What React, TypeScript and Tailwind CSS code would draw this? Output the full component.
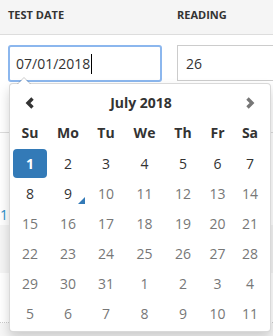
const cols = "grid grid-cols-[34px_42px_34px_43px_34px_35px_30px]";

const dow = ["Su", "Mo", "Tu", "We", "Th", "Fr", "Sa"];

// day, kind: sel | active | today | off
const weeks: [number, string][][] = [
  [[1, "sel"], [2, "active"], [3, "active"], [4, "active"], [5, "active"], [6, "active"], [7, "active"]],
  [[8, "active"], [9, "today"], [10, "off"], [11, "off"], [12, "off"], [13, "off"], [14, "off"]],
  [[15, "off"], [16, "off"], [17, "off"], [18, "off"], [19, "off"], [20, "off"], [21, "off"]],
  [[22, "off"], [23, "off"], [24, "off"], [25, "off"], [26, "off"], [27, "off"], [28, "off"]],
  [[29, "off"], [30, "off"], [31, "off"], [1, "off"], [2, "off"], [3, "off"], [4, "off"]],
  [[5, "off"], [6, "off"], [7, "off"], [8, "off"], [9, "off"], [10, "off"], [11, "off"]],
];

function Chevron({ dir }: { dir: "left" | "right" }) {
  return (
    <svg width="10" height="12" viewBox="0 0 10 12">
      <polyline
        points={dir === "left" ? "7.5,1.5 3,6 7.5,10.5" : "2.5,1.5 7,6 2.5,10.5"}
        fill="none"
        stroke="currentColor"
        strokeWidth="3.4"
        strokeLinejoin="miter"
      />
    </svg>
  );
}

function DayCell({ day, kind }: { day: number; kind: string }) {
  if (kind === "sel") {
    return (
      <div className="flex h-[30px] items-center justify-center">
        <span className="flex h-[29px] w-[34px] items-center justify-center rounded-[4px] bg-[#337ab7] font-bold text-white">
          {day}
        </span>
      </div>
    );
  }
  return (
    <div
      className={
        kind === "off"
          ? "relative flex h-[30px] items-center justify-center text-[#777]"
          : "relative flex h-[30px] items-center justify-center text-[#333]"
      }
    >
      {day}
      {kind === "today" && (
        <span className="absolute bottom-[4px] right-[4px] h-0 w-0 border-l-[7px] border-b-[7px] border-l-transparent border-b-[#337ab7]" />
      )}
    </div>
  );
}

export default function App() {
  return (
    <div className="relative h-[336px] w-[273px] overflow-hidden bg-white font-['Open_Sans',sans-serif] text-[#333]">
      {/* table behind the picker */}
      <div className="flex h-[35px] items-center border-b border-[#ddd] bg-[#f5f5f5] pb-[3px] text-[11px] font-bold uppercase">
        <div className="w-[177px] pl-[8px]">Test Date</div>
        <div>Reading</div>
      </div>
      <div className="flex h-[98px] gap-[15px] border-b border-[#ddd] px-[8px] pt-[10px]">
        <div className="flex h-[37px] w-[154px] shrink-0 items-center rounded-[3px] border-2 border-[#8cb7ee] pl-[6px] text-[14px]">
          07/01/2018
          <span className="ml-[1px] h-[20px] w-px bg-black" />
        </div>
        <div className="flex h-[36px] w-[120px] shrink-0 items-center border border-[#ccc] pl-[8px] text-[14px]">
          26
        </div>
      </div>
      <div className="flex h-[92px] items-end text-[14px] text-[#2a8fc9]">
        <span>11</span>
      </div>
      <div className="h-[48px] bg-[#f5f5f5]" />
      <div className="h-[50px] border-b border-dotted border-[#ccc]" />
      <div className="h-[20px] bg-[#f7f7f7]" />

      {/* date picker popup */}
      <div className="absolute left-[9px] top-[83px] w-[262px] rounded-[4px] border border-[rgba(0,0,0,0.15)] bg-white px-[3px] pb-[3px] pt-[4px] text-[14px] shadow-[0_6px_12px_rgba(0,0,0,0.175)]">
        <span className="absolute -top-[7px] left-[7px] h-0 w-0 border-x-[7px] border-b-[7px] border-x-transparent border-b-[rgba(0,0,0,0.2)]" />
        <span className="absolute -top-[6px] left-[8px] h-0 w-0 border-x-[6px] border-b-[6px] border-x-transparent border-b-white" />
        <div className={cols + " h-[29px] items-center font-bold"}>
          <div className="flex justify-center text-[#333]">
            <Chevron dir="left" />
          </div>
          <div className="col-span-5 text-center">July 2018</div>
          <div className="flex justify-center text-[#777]">
            <Chevron dir="right" />
          </div>
        </div>
        <div className={cols + " h-[31px] items-center font-bold"}>
          {dow.map((d) => (
            <div key={d} className="text-center">
              {d}
            </div>
          ))}
        </div>
        {weeks.map((w, i) => (
          <div key={i} className={cols}>
            {w.map(([day, kind], j) => (
              <DayCell key={j} day={day} kind={kind} />
            ))}
          </div>
        ))}
      </div>
    </div>
  );
}
